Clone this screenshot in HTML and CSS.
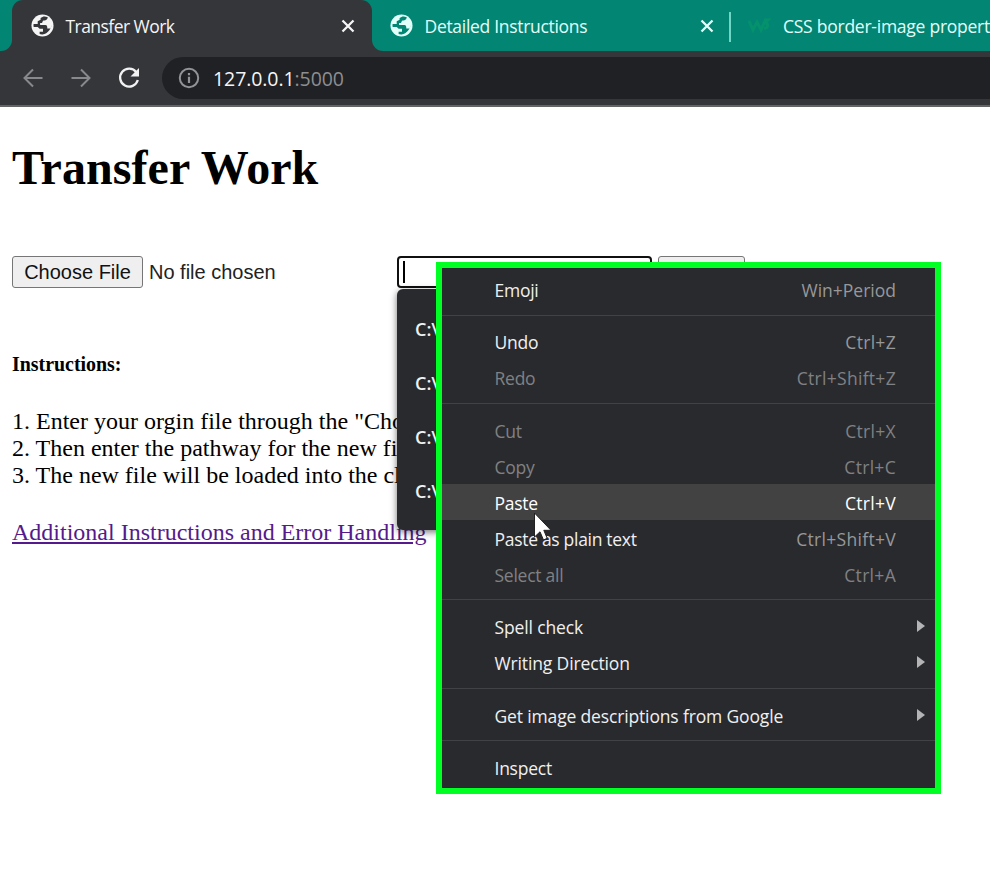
FILE: index.html
```html
<!DOCTYPE html>
<html lang="en">
<head>
<meta charset="utf-8">
<title>Transfer Work</title>
<link rel="stylesheet" href="styles.css">
</head>
<body>
<svg class="defs" aria-hidden="true">
  <symbol id="globe" viewBox="0 0 24 24">
    <circle cx="12" cy="12" r="11.5" fill="currentColor"/>
    <path class="land" d="M17.500 3.500C17 6.500 15 7 12.500 7L11.500 9.500H9.500V11.500H15C17 11.500 17 13.500 17 15H20C21 14 21.300 12.500 21.300 11.500 20.800 15.500 18 20.500 12 21.300C10.500 21.400 9.500 21 9 20.800V18.500H12.500V15.500H9L7 13.500H2.800C2.500 12.500 2.500 11.500 2.700 10.500L7 10.500V7.500L10 6V4.300L13 2.700C15 2.800 16.500 3 17.500 3.500Z"/>
  </symbol>
  <symbol id="close" viewBox="0 0 16 16"><path d="M2.500 2.500 13.500 13.500M13.500 2.500 2.500 13.500" fill="none" stroke="currentColor" stroke-width="2.300"/></symbol>
  <symbol id="arrow" viewBox="0 0 24 24"><path d="M21.500 12H3.500M12 3.500 3.500 12 12 20.500" fill="none" stroke="currentColor" stroke-width="2"/></symbol>
</svg>

<header class="browser">
  <div class="tabs">
    <div class="tab active">
      <svg class="favicon"><use href="#globe"/></svg>
      <span class="title t-work">Transfer Work</span>
      <svg class="close"><use href="#close"/></svg>
    </div>
    <div class="tab">
      <svg class="favicon"><use href="#globe"/></svg>
      <span class="title t-detail">Detailed Instructions</span>
      <svg class="close"><use href="#close"/></svg>
    </div>
    <div class="tab last">
      <svg class="school" viewBox="0 0 24 24"><path d="M2 7 6 16 10 8 14 16 18 7M17 6H21L18.500 9C22 10 21 15 17 14" fill="none" stroke="#04926c" stroke-width="3"/></svg>
      <span class="title t-css">CSS border-image propert</span>
    </div>
  </div>
  <div class="toolbar">
    <svg class="nav"><use href="#arrow"/></svg>
    <svg class="nav forward"><use href="#arrow"/></svg>
    <svg class="reload" viewBox="0 0 24 24"><path d="M19.300 6.200A9 9 0 1 0 20.800 14" fill="none" stroke="currentColor" stroke-width="2.300"/><path d="M22 2V10.500H13.500Z" fill="currentColor"/></svg>
    <div class="address">
      <svg class="info" viewBox="0 0 22 22"><circle cx="11" cy="11" r="9.200" fill="none" stroke="currentColor" stroke-width="2"/><path d="M11 9.800V16M11 6V8.200" stroke="currentColor" stroke-width="2.200"/></svg>
      <span class="url">127.0.0.1<span class="port">:5000</span></span>
    </div>
  </div>
</header>

<main>
  <h1>Transfer Work</h1>
  <form class="upload">
    <span class="choose">Choose File</span>
    <span class="status">No file chosen</span>
    <div class="path"><span class="caret"></span>
      <ul class="suggestions"><li>C:\</li><li>C:\</li><li>C:\</li><li>C:\</li></ul>
    </div>
    <span class="submit"></span>
  </form>
  <h5>Instructions:</h5>
  <div class="steps">
    <div>1. Enter your orgin file through the "Cho</div>
    <div>2. Then enter the pathway for the new fi</div>
    <div>3. The new file will be loaded into the cl</div>
  </div>
  <a class="more">Additional Instructions and Error Handling</a>
</main>

<div class="menu">
  <div class="item"><span>Emoji</span><kbd class="k-win">Win+Period</kbd></div>
  <hr>
  <div class="item"><span>Undo</span><kbd>Ctrl+Z</kbd></div>
  <div class="item off"><span>Redo</span><kbd>Ctrl+Shift+Z</kbd></div>
  <hr>
  <div class="item off"><span>Cut</span><kbd>Ctrl+X</kbd></div>
  <div class="item off"><span>Copy</span><kbd>Ctrl+C</kbd></div>
  <div class="item hover"><span>Paste</span><kbd>Ctrl+V</kbd></div>
  <div class="item"><span class="m-plain">Paste as plain text</span><kbd>Ctrl+Shift+V</kbd></div>
  <div class="item off"><span>Select all</span><kbd>Ctrl+A</kbd></div>
  <hr>
  <div class="item sub"><span class="m-wide">Spell check</span><i></i></div>
  <div class="item sub"><span class="m-wide">Writing Direction</span><i></i></div>
  <hr>
  <div class="item sub"><span class="m-get">Get image descriptions from Google</span><i></i></div>
  <hr>
  <div class="item"><span>Inspect</span></div>
</div>
<svg class="pointer" viewBox="0 0 20 30"><path d="M1.500 1V25L7 19.800 10.500 28 14.200 26.300 10.800 18.300H18Z" fill="#fff" stroke="#222" stroke-width="1"/></svg>
</body>
</html>
```
FILE: styles.css
```css
* { box-sizing: border-box; }
body {
  margin: 0;
  width: 990px;
  height: 886px;
  overflow: hidden;
  position: relative;
  background: #fff;
  color: #000;
  font: 24px/27px "Liberation Serif", serif;
}
.defs { position: absolute; width: 0; height: 0; }
svg { flex: none; }

.browser { height: 107px; background: #35363a; border-bottom: 2px solid #646464; font-family: "Open Sans", sans-serif; overflow: hidden; }
.tabs { display: flex; height: 51px; background: #35363a; }
.tabs::before { content: ""; width: 12px; background: #038573; border-bottom-right-radius: 11px; }
.tab {
  --land: #038573;
  display: flex;
  align-items: center;
  flex: none;
  width: 358px;
  padding: 0 15.500px 0 17.500px;
  background: #038573;
  color: #e2fffa;
  border-bottom-left-radius: 11px;
  position: relative;
}
.tab.active { --land: #35363a; width: 360px; padding: 0 16px 0 18.500px; background: linear-gradient(#038573 12px, #35363a 12px); color: #f5f5f5; }
.tab.active::before { content: ""; position: absolute; inset: 0; background: #35363a; border-radius: 11px 11px 0 0; }
.tab.active > * { position: relative; }
.tab.last { width: 260px; padding-left: 17px; border-radius: 0; }
.tab.last::before { content: ""; position: absolute; left: -1px; top: 12px; width: 2px; height: 30px; background: #70d6c6; }
.favicon { width: 23px; height: 23px; margin-right: 12px; }
.land { fill: var(--land); }
.title { flex: 1; font-size: 17.500px; line-height: 26px; white-space: nowrap; }
.close { width: 16px; height: 16px; }
.school { width: 24px; height: 24px; margin-right: 12px; }
.t-work { letter-spacing: -0.550px; }
.t-detail { letter-spacing: -0.300px; }
.t-css { letter-spacing: -0.250px; }
.toolbar { display: flex; align-items: center; height: 54px; padding-left: 21px; color: #88898c; }
.nav { width: 24px; height: 24px; }
.forward { margin-left: 24px; transform: scaleX(-1); }
.reload { width: 24px; height: 24px; margin-left: 24px; color: #f2f2f2; }
.address { display: flex; align-items: center; flex: 1; height: 42px; margin-left: 21px; padding-left: 16px; background: #202124; border-radius: 21px 0 0 21px; }
.info { width: 22px; height: 22px; color: #929396; }
.url { margin-left: 13px; font-size: 19.500px; letter-spacing: -0.080px; color: #f5f5f5; }
.port { color: #8d8e91; }

main { padding: 0 12px; }
h1 { margin: 34px 0 61px; font-size: 48px; line-height: 54px; letter-spacing: 0.080px; }
.upload { display: flex; height: 32px; font: 20px/30px "Liberation Sans", sans-serif; color: #222; }
.choose { width: 131px; border: 1px solid #767676; border-radius: 3px; background: #efefef; text-align: center; color: #111; }
.status { width: 254px; padding: 1px 0 0 6px; }
.path { width: 255px; height: 32px; border: 2px solid #101010; border-radius: 4px; position: relative; }
.caret { display: block; width: 2px; height: 22px; margin: 3px 0 0 4px; background: #000; }
.submit { width: 87px; margin-left: 6px; border: 1px solid #767676; border-radius: 3px; background: #efefef; }
.suggestions { position: absolute; left: -2px; top: 31px; width: 255px; height: 241px; margin: 0; padding: 12.500px 0 0 18px; list-style: none; background: #292a2d; border-radius: 6px; box-shadow: 0 2px 7px rgba(0,0,0,.55); color: #f1f1f1; font: 600 18px/54px "Open Sans", sans-serif; }
h5 { margin: 62px 0 30px; font-size: 19.920px; line-height: 28px; }
.more { display: block; margin-top: 30px; color: #551a8b; text-decoration: underline; }

.menu { position: absolute; left: 436px; top: 262px; width: 505px; height: 532px; padding-top: 3px; border: 6px solid #00ff22; background: #292a2d; color: #f0f0f0; font: 17.500px/36px "Open Sans", sans-serif; }
.item { display: flex; justify-content: space-between; height: 36px; padding: 1px 39px 0 52.500px; white-space: nowrap; letter-spacing: -0.250px; }
.item kbd { font: inherit; letter-spacing: 0.300px; color: #97989a; }
.item .k-win { letter-spacing: 0; }
.off, .item.off kbd { color: #808184; }
.hover { background: #424242; color: #fff; }
.item.hover kbd { color: #fff; }
.m-plain { letter-spacing: -0.300px; }
.m-wide { letter-spacing: -0.130px; }
.m-get { letter-spacing: -0.150px; }
.menu hr { height: 1px; margin: 7.500px 0 7.900px; border: 0; background: #414246; }
.sub { padding-right: 10px; }
.sub i { width: 0; height: 0; margin-top: 11px; border: 6px solid transparent; border-left: 8px solid #b4b4b7; border-right: 0; }
.pointer { position: absolute; left: 533px; top: 512px; width: 20px; height: 30px; }
```
